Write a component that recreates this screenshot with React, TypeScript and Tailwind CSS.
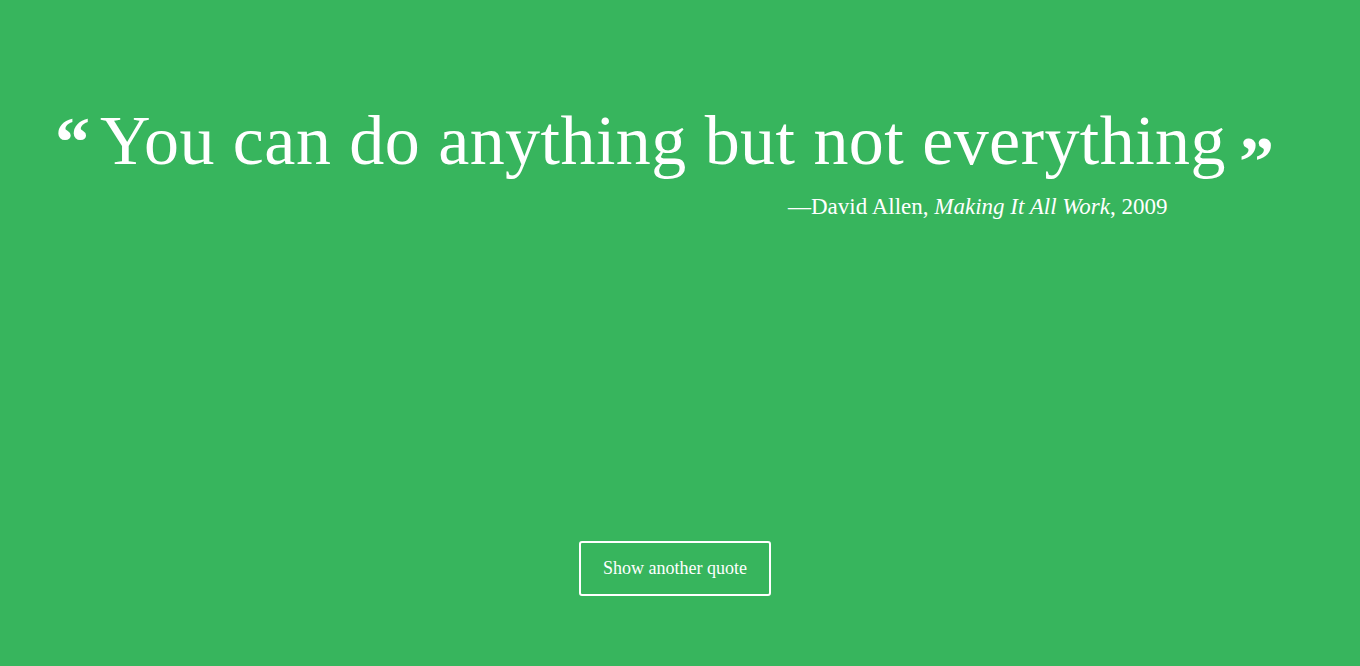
import { useState } from 'react';

const quotes = [
  { text: 'You can do anything but not everything', author: 'David Allen', source: 'Making It All Work', year: '2009' },
];

export default function App() {
  const [index, setIndex] = useState(0);
  const quote = quotes[index];

  return (
    <div className="min-h-[666px] w-full bg-[#37b55d] text-white font-['Liberation_Serif',serif]">
      <div className="pt-[102px] pl-[55px]">
        <h1 className="flex items-start whitespace-nowrap text-[70px] leading-[78px] font-normal tracking-[0.45px]">
          <span className="mt-[15px] w-[45px] text-[70px] leading-[50px] font-bold tracking-normal">&ldquo;</span>
          <span>{quote.text}</span>
          <span className="mt-[35px] ml-[13px] text-[70px] leading-[50px] font-bold tracking-normal">&rdquo;</span>
        </h1>
        <p className="mt-[5px] pl-[733px] text-[23px] leading-[30px]">
          &mdash;{quote.author}, <em>{quote.source}</em>, {quote.year}
        </p>
      </div>
      <div className="mt-[319px] flex justify-center pr-[10px]">
        <button
          onClick={() => setIndex((index + 1) % quotes.length)}
          className="h-[55px] w-[192px] rounded-[3px] border-2 border-white text-[18px]"
        >
          Show another quote
        </button>
      </div>
    </div>
  );
}
